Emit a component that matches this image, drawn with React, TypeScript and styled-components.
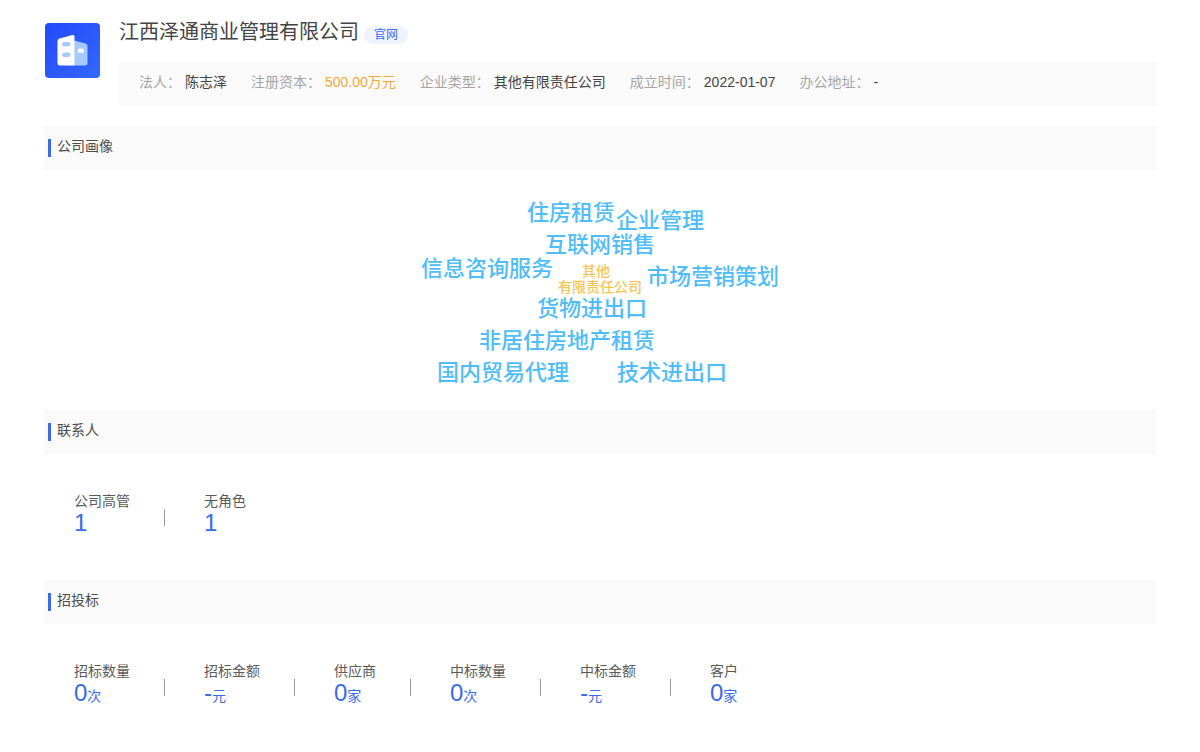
import React from "react";
import styled, { createGlobalStyle } from "styled-components";

const GlobalStyle = createGlobalStyle`
  * { box-sizing: border-box; }
  body {
    margin: 0;
    background: #fff;
    color: #444;
    font-family: "Liberation Sans", "Noto Sans CJK SC", sans-serif;
    font-size: 14px;
    line-height: 20px;
  }
  h1, h2, dl, dt, dd { margin: 0; font-weight: 400; }
`;

const Page = styled.main`
  padding: 18px 44px 0;
`;

const Header = styled.header`
  display: flex;
  align-items: flex-start;
  gap: 19px;
  margin-bottom: 20px;
`;

const Logo = styled.svg`
  flex: none;
  width: 56px;
  height: 56px;
  margin-top: 4px;
`;

const HeaderBody = styled.div`
  flex: 1;
  min-width: 0;
`;

const TitleRow = styled.div`
  display: flex;
  align-items: flex-start;
  gap: 5px;
  height: 44px;
`;

const Title = styled.h1`
  font-size: 20px;
  line-height: 28px;
  color: #444;
`;

const SiteLink = styled.a`
  margin-top: 8px;
  padding: 0 10px;
  border-radius: 9px;
  background: #eef3fe;
  color: #3a6df0;
  font-size: 12px;
  line-height: 18px;
  text-decoration: none;
`;

const InfoBar = styled.dl`
  display: flex;
  flex-wrap: wrap;
  column-gap: 24px;
  padding: 10px 20px 14px;
  background: #fafafa;
`;

const InfoItem = styled.div`
  display: flex;
  gap: 4px;
`;

const InfoLabel = styled.dt`
  color: #a6a6a6;
`;

const InfoValue = styled.dd<{ $accent?: boolean }>`
  color: ${(p) => (p.$accent ? "#f0a93c" : "#444")};
`;

const SectionBar = styled.div`
  display: flex;
  align-items: center;
  gap: 6px;
  height: 44px;
  padding-left: 4px;
  background: #fafafa;

  &::before {
    content: "";
    width: 3px;
    height: 18px;
    background: #3a6ae8;
  }
`;

const SectionTitle = styled.h2`
  padding-bottom: 4px;
  font-size: 14px;
  line-height: 20px;
  color: #4c4c4c;
`;

const Cloud = styled.div`
  position: relative;
  height: 240px;
`;

const Tag = styled.span<{ $x: number; $y: number; $core?: boolean }>`
  position: absolute;
  left: calc(50% + ${(p) => p.$x}px);
  top: ${(p) => p.$y}px;
  transform: translateY(-50%);
  white-space: nowrap;
  font-weight: 500;
  font-size: ${(p) => (p.$core ? 14 : 22)}px;
  line-height: ${(p) => (p.$core ? 16 : 24)}px;
  color: ${(p) => (p.$core ? "#f6c453" : "#4fbdf8")};
`;

const Stats = styled.dl`
  display: flex;
  height: 126px;
  padding: 37px 30px 0;
`;

const Stat = styled.div`
  display: flex;
  flex-direction: column;

  &:not(:first-child) {
    position: relative;
    margin-left: 74px;
  }

  &:not(:first-child)::before {
    content: "";
    position: absolute;
    left: -40px;
    top: 18px;
    width: 1px;
    height: 17px;
    background: #999;
  }
`;

const StatLabel = styled.dt`
  color: #5a5a5a;
`;

const StatValue = styled.dd`
  font-size: 24px;
  line-height: 24px;
  color: #3a6ae8;
`;

const Unit = styled.span`
  font-size: 14px;
`;

const info = [
  { label: "法人：", value: "陈志泽" },
  { label: "注册资本：", value: "500.00万元", accent: true },
  { label: "企业类型：", value: "其他有限责任公司" },
  { label: "成立时间：", value: "2022-01-07" },
  { label: "办公地址：", value: "-" },
];

/* x is measured from the middle of the cloud, y from its top edge */
const tags = [
  { text: "住房租赁", x: -73, y: 43 },
  { text: "企业管理", x: 16, y: 51 },
  { text: "互联网销售", x: -55, y: 75 },
  { text: "信息咨询服务", x: -179, y: 99 },
  { text: "其他", x: -18, y: 101, core: true },
  { text: "有限责任公司", x: -42, y: 117, core: true },
  { text: "市场营销策划", x: 47, y: 107 },
  { text: "货物进出口", x: -63, y: 139 },
  { text: "非居住房地产租赁", x: -121, y: 171 },
  { text: "国内贸易代理", x: -163, y: 203 },
  { text: "技术进出口", x: 17, y: 203 },
];

type StatData = { label: string; value: string; unit?: string };

const contacts: StatData[] = [
  { label: "公司高管", value: "1" },
  { label: "无角色", value: "1" },
];

const bids: StatData[] = [
  { label: "招标数量", value: "0", unit: "次" },
  { label: "招标金额", value: "-", unit: "元" },
  { label: "供应商", value: "0", unit: "家" },
  { label: "中标数量", value: "0", unit: "次" },
  { label: "中标金额", value: "-", unit: "元" },
  { label: "客户", value: "0", unit: "家" },
];

function StatList({ items }: { items: StatData[] }) {
  return (
    <Stats>
      {items.map((s) => (
        <Stat key={s.label}>
          <StatLabel>{s.label}</StatLabel>
          <StatValue>
            {s.value}
            {s.unit && <Unit>{s.unit}</Unit>}
          </StatValue>
        </Stat>
      ))}
    </Stats>
  );
}

function Section({ title, children }: { title: string; children: React.ReactNode }) {
  return (
    <section>
      <SectionBar>
        <SectionTitle>{title}</SectionTitle>
      </SectionBar>
      {children}
    </section>
  );
}

export default function App() {
  return (
    <Page>
      <GlobalStyle />
      <Header>
        <Logo viewBox="0 0 56 56" aria-hidden="true">
          <defs>
            <linearGradient id="logo-bg" x1="0" y1="0" x2="1" y2="1">
              <stop offset="0" stopColor="#2448fb" />
              <stop offset="1" stopColor="#3468fb" />
            </linearGradient>
          </defs>
          <rect x="1" y="1" width="55" height="55" rx="4" fill="url(#logo-bg)" />
          <path d="M30 18.500 L41.500 21.500 Q43.500 22 43.500 24 V41 Q43.500 43.500 41 43.500 H30 Z" fill="#a5c9fa" />
          <path d="M15.500 16.500 L28.500 13 Q30.500 12.500 30.500 14.500 V43.500 H16 Q13.500 43.500 13.500 41 V19 Q13.500 17 15.500 16.500 Z" fill="#fff" />
          <rect x="18" y="20" width="8.500" height="4.500" rx="2.200" fill="#a5c9fa" />
          <rect x="18" y="30.500" width="8.500" height="4.500" rx="2.200" fill="#a5c9fa" />
          <rect x="33.500" y="26.500" width="6.500" height="4.500" rx="2.200" fill="#fff" />
        </Logo>
        <HeaderBody>
          <TitleRow>
            <Title>江西泽通商业管理有限公司</Title>
            <SiteLink href="#">官网</SiteLink>
          </TitleRow>
          <InfoBar>
            {info.map((i) => (
              <InfoItem key={i.label}>
                <InfoLabel>{i.label}</InfoLabel>
                <InfoValue $accent={i.accent}>{i.value}</InfoValue>
              </InfoItem>
            ))}
          </InfoBar>
        </HeaderBody>
      </Header>

      <Section title="公司画像">
        <Cloud>
          {tags.map((t) => (
            <Tag key={t.text} $x={t.x} $y={t.y} $core={t.core}>
              {t.text}
            </Tag>
          ))}
        </Cloud>
      </Section>
      <Section title="联系人">
        <StatList items={contacts} />
      </Section>
      <Section title="招投标">
        <StatList items={bids} />
      </Section>
    </Page>
  );
}
